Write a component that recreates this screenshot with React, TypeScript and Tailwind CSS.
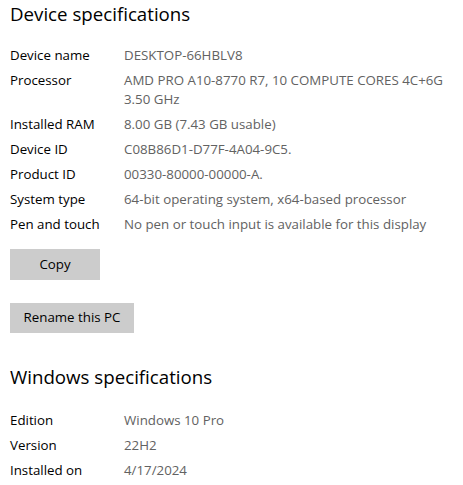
const device = [
  { label: "Device name", value: ["DESKTOP-66HBLV8"] },
  { label: "Processor", value: ["AMD PRO A10-8770 R7, 10 COMPUTE CORES 4C+6G", "3.50 GHz"] },
  { label: "Installed RAM", value: ["8.00 GB (7.43 GB usable)"] },
  { label: "Device ID", value: ["C08B86D1-D77F-4A04-9C5."] },
  { label: "Product ID", value: ["00330-80000-00000-A."] },
  { label: "System type", value: ["64-bit operating system, x64-based processor"] },
  { label: "Pen and touch", value: ["No pen or touch input is available for this display"] },
]

const windows = [
  { label: "Edition", value: ["Windows 10 Pro"] },
  { label: "Version", value: ["22H2"] },
  { label: "Installed on", value: ["4/17/2024"] },
]

function SpecRows({ rows }: { rows: { label: string; value: string[] }[] }) {
  return (
    <div className="flex flex-col gap-[6px]">
      {rows.map((row) => (
        <div key={row.label} className="flex text-[13.3px] leading-[19px]">
          <div className="w-[114px] shrink-0 text-black">{row.label}</div>
          <div className="text-[#626262]">
            {row.value.map((line) => (
              <div key={line} className="whitespace-nowrap">{line}</div>
            ))}
          </div>
        </div>
      ))}
    </div>
  )
}

export default function App() {
  return (
    <div className="w-[463px] h-[485px] bg-white overflow-hidden px-[10px] font-['Open_Sans',sans-serif]">
      <h1 className="text-[18.7px] leading-[28px] text-black">Device specifications</h1>
      <div className="mt-[18px]">
        <SpecRows rows={device} />
      </div>

      <div className="mt-[15px] flex flex-col items-start gap-[23px]">
        <button className="w-[90px] h-[31px] bg-[#cccccc] text-[13.3px] text-black">Copy</button>
        <button className="w-[124px] h-[30px] bg-[#cccccc] text-[13.3px] text-black">Rename this PC</button>
      </div>

      <h1 className="mt-[30px] text-[18.7px] leading-[28px] text-black">Windows specifications</h1>
      <div className="mt-[20px]">
        <SpecRows rows={windows} />
      </div>
    </div>
  )
}
